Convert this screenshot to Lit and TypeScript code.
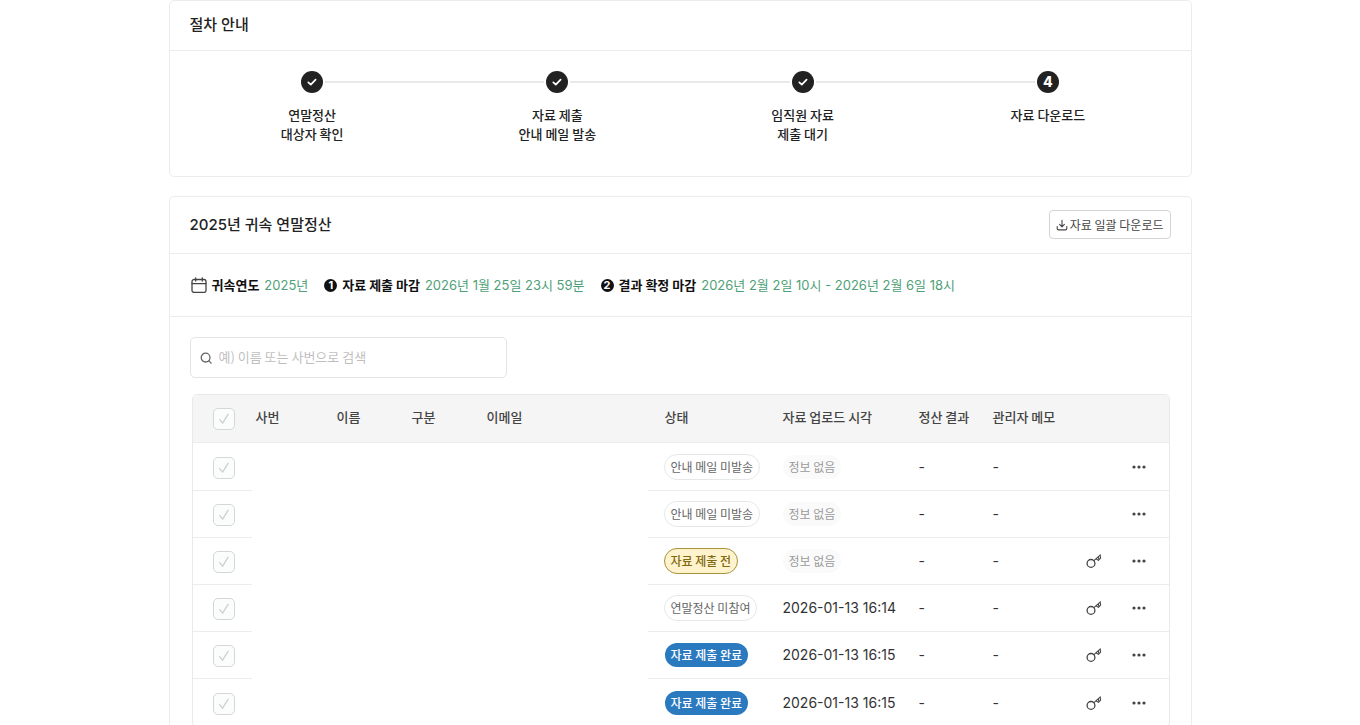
import { LitElement, html, css, svg, nothing } from "lit";
import { customElement } from "lit/decorators.js";

interface Row {
  status: string;
  tone: "plain" | "warn" | "done";
  time?: string;
  key?: boolean;
}

const ROWS: Row[] = [
  { status: "안내 메일 미발송", tone: "plain" },
  { status: "안내 메일 미발송", tone: "plain" },
  { status: "자료 제출 전", tone: "warn", key: true },
  { status: "연말정산 미참여", tone: "plain", time: "2026-01-13 16:14", key: true },
  { status: "자료 제출 완료", tone: "done", time: "2026-01-13 16:15", key: true },
  { status: "자료 제출 완료", tone: "done", time: "2026-01-13 16:15", key: true },
];

const STEPS: { lines: string[]; done: boolean }[] = [
  { lines: ["연말정산", "대상자 확인"], done: true },
  { lines: ["자료 제출", "안내 메일 발송"], done: true },
  { lines: ["임직원 자료", "제출 대기"], done: true },
  { lines: ["자료 다운로드"], done: false },
];

const icon = (size: number, body: unknown) => html`<svg
  class="icon" width=${size} height=${size} viewBox="0 0 ${size} ${size}"
  fill="none" stroke="currentColor" stroke-linecap="round" stroke-linejoin="round"
  aria-hidden="true">${body}</svg>`;

const stepCheck = icon(22, svg`<path d="M7.3 11.3 9.8 13.7 14.6 8.6" stroke-width="1.7"/>`);
const calendar = icon(16, svg`<rect x="1" y="2.5" width="14" height="12.9" rx="2" stroke-width="1.3"/><path d="M1 6.6H15M4.7 .8V4M11.3 .8V4" stroke-width="1.3"/>`);
const download = icon(12, svg`<path d="M6 1.2V7.6M3.6 5.4 6 7.8 8.4 5.4M1.2 7.6V9.6Q1.2 10.9 2.5 10.9H9.5Q10.8 10.9 10.8 9.6V7.6" stroke-width="1.1"/>`);
const search = icon(12, svg`<circle cx="5.6" cy="5.6" r="4.4" stroke-width="1.3"/><path d="M8.9 8.9 11.1 11.1" stroke-width="1.3"/>`);
const keyIcon = icon(16, svg`<circle cx="5" cy="10.4" r="3.9" stroke-width="1.3"/><path d="M7.9 7.6 14.4 1.8M10 5.7 12.4 7.4 14.6 5.2 14.2 2.2M12.2 3.9 13 6.6" stroke-width="1.1"/>`);
const dots = html`<svg class="icon" width="16" height="16" viewBox="0 0 16 16" fill="currentColor" aria-hidden="true">
  <circle cx="3" cy="8" r="1.6"/><circle cx="8" cy="8" r="1.6"/><circle cx="13" cy="8" r="1.6"/></svg>`;

@customElement("app-root")
export class AppRoot extends LitElement {
  static styles = css`
    :host {
      display: block;
      background: #fff;
      color: #222;
      font: 400 13px/20px Inter, "Noto Sans CJK KR", sans-serif;
    }
    * { box-sizing: border-box; }
    h2, p, ol { margin: 0; padding: 0; }
    .page {
      max-width: 1023px;
      margin: 0 auto;
      display: flex;
      flex-direction: column;
      gap: 19px;
    }
    .card { border: 1px solid #ececec; border-radius: 5px; }
    .open { border-bottom: 0; border-radius: 5px 5px 0 0; }
    .head {
      display: flex;
      align-items: center;
      justify-content: space-between;
      padding: 13px 20px 15px;
      border-bottom: 1px solid #ececec;
    }
    h2 { font-size: 15px; line-height: 21px; font-weight: 500; }
    .icon { display: block; flex: none; }

    .steps {
      list-style: none;
      display: grid;
      grid-template-columns: repeat(4, 1fr);
      padding: 20px 20px 33px;
    }
    .step { text-align: center; }
    .track {
      display: grid;
      grid-template-columns: 1fr 22px 1fr;
      column-gap: 2px;
      align-items: center;
      margin-bottom: 12px;
    }
    .rail { height: 2px; background: #e9e9e9; }
    .step:first-child .rail:first-child,
    .step:last-child .rail:last-child { background: none; }
    .dot {
      display: grid;
      place-items: center;
      height: 22px;
      border-radius: 50%;
      background: #222;
      color: #fff;
      font-size: 14px;
      font-weight: 800;
      line-height: 22px;
    }
    .label {
      font-family: "Noto Sans CJK KR", sans-serif;
      font-weight: 500;
      line-height: 19px;
    }
    .label span { display: block; }

    .head.tall { padding-bottom: 14px; }
    button { font: inherit; color: inherit; background: none; border: 0; padding: 0; cursor: pointer; }
    .download {
      display: flex;
      align-items: center;
      gap: 2px;
      height: 29px;
      padding: 0 6px;
      border: 1px solid #d4d4d4;
      border-radius: 4px;
      color: #444;
      font: 400 12px/18px "Noto Sans CJK KR", sans-serif;
    }

    .meta {
      display: flex;
      flex-wrap: wrap;
      gap: 4px 16px;
      padding: 21px 21px;
      border-bottom: 1px solid #ececec;
    }
    .item { display: flex; align-items: center; gap: 5px; color: #111; }
    .item strong { font-weight: 700; font-family: "Noto Sans CJK KR", sans-serif; }
    .item .icon { color: #444; }
    .value { color: #4f9f78; }
    .num {
      width: 13px;
      height: 13px;
      border-radius: 50%;
      background: #111;
      color: #fff;
      font-size: 11px;
      line-height: 13px;
      font-weight: 700;
      text-align: center;
    }

    .body { padding: 20px 20px 0; }
    .search {
      display: flex;
      align-items: center;
      gap: 7px;
      width: 317px;
      max-width: 100%;
      height: 41px;
      padding: 0 9px;
      border: 1px solid #e2e4e5;
      border-radius: 5px;
      color: #666;
    }
    .search input {
      flex: 1;
      min-width: 0;
      border: 0;
      outline: 0;
      padding: 0 0 2px;
      background: none;
      font: 400 13px/20px "Noto Sans CJK KR", sans-serif;
      color: #222;
    }
    .search input::placeholder { color: #bfbfbf; opacity: 1; }

    .frame {
      margin: 16px 1px 0 2px;
      border: 1px solid #e9e9e9;
      border-radius: 5px;
      overflow: hidden;
    }
    table { width: 100%; table-layout: fixed; border-collapse: separate; border-spacing: 0; }
    th, td { height: 47px; padding: 0 0 0 17px; text-align: left; border-bottom: 1px solid #ececec; }
    th {
      height: 48px;
      background: #f5f5f5;
      color: #444;
      font-family: "Noto Sans CJK KR", sans-serif;
      font-weight: 500;
      padding-bottom: 3px;
    }
    td { color: #333; font-size: 14px; }
    tbody tr:first-child td { height: 48px; }
    tbody tr:last-child td { border-bottom: 0; }
    th.person, td.person { padding-left: 4px; }
    td.person { border-bottom-color: transparent; }
    .c-check { width: 59px; }
    .c-id { width: 81px; }
    .c-name, .c-kind { width: 75px; }
    .c-status { width: 118px; }
    .c-time { width: 136px; }
    .c-result { width: 74px; }
    .c-memo { width: 103px; }
    .c-key { width: 30px; }
    .c-more { width: 60px; }
    th.tick { padding: 0 0 0 20px; }
    td.tick { padding: 2px 0 0 20px; }
    .box { display: grid; width: 22px; height: 22px; }
    .box input, .box .icon { grid-area: 1 / 1; margin: 0; }
    .box input {
      appearance: none;
      width: 22px;
      height: 22px;
      border: 1px solid #d4d7d8;
      border-radius: 5px;
      background: #fbfdfd;
    }
    .box .icon { color: #cdd0d1; pointer-events: none; z-index: 1; }

    .pill, .none {
      display: inline-block;
      vertical-align: middle;
      font: 400 12px/18px "Noto Sans CJK KR", sans-serif;
      border-radius: 13px;
      white-space: nowrap;
    }
    td.status { padding-left: 16px; }
    .pill { padding: 3px 6px; border: 1px solid #e6e8e8; color: #666; }
    .pill.warn { background: #fff3cd; border-color: #a8923a; color: #7f6a10; font-weight: 500; }
    .pill.done { background: #2b7abf; background-clip: padding-box; border-color: transparent; color: #fff; font-weight: 500; }
    .none { padding: 3px 6px; background: #fafafa; color: #9a9a9a; }
    td.act { padding-left: 0; }
    .act button { display: grid; place-items: center; width: 100%; height: 24px; color: #444; }
  `;

  private tick(label: string) {
    return html`<label class="box"><input type="checkbox" disabled aria-label=${label} />${icon(
      22,
      svg`<path d="M6.6 11.6 9.6 15.2 15.2 6.2" stroke-width="1.3"/>`,
    )}</label>`;
  }

  private step(s: { lines: string[]; done: boolean }, i: number) {
    return html`<li class="step">
      <div class="track">
        <span class="rail"></span>
        <span class="dot">${s.done ? stepCheck : i + 1}</span>
        <span class="rail"></span>
      </div>
      <p class="label">${s.lines.map((l) => html`<span>${l}</span>`)}</p>
    </li>`;
  }

  private row(r: Row, i: number) {
    return html`<tr>
      <td class="tick">${this.tick(`${i + 1}행 선택`)}</td>
      <td class="person"></td>
      <td class="person"></td>
      <td class="person"></td>
      <td class="person"></td>
      <td class="status"><span class="pill ${r.tone}">${r.status}</span></td>
      <td>${r.time ?? html`<span class="none">정보 없음</span>`}</td>
      <td>-</td>
      <td>-</td>
      <td class="act">${r.key ? html`<button type="button" aria-label="비밀번호">${keyIcon}</button>` : nothing}</td>
      <td class="act"><button type="button" aria-label="더보기">${dots}</button></td>
    </tr>`;
  }

  render() {
    return html`<main class="page">
      <section class="card">
        <header class="head"><h2>절차 안내</h2></header>
        <ol class="steps">${STEPS.map((s, i) => this.step(s, i))}</ol>
      </section>
      <section class="card open">
        <header class="head tall">
          <h2>2025년 귀속 연말정산</h2>
          <button class="download" type="button">${download}자료 일괄 다운로드</button>
        </header>
        <div class="meta">
          <span class="item">${calendar}<strong>귀속연도</strong><span class="value">2025년</span></span>
          <span class="item"><span class="num">1</span><strong>자료 제출 마감</strong><span class="value">2026년 1월 25일 23시 59분</span></span>
          <span class="item"><span class="num">2</span><strong>결과 확정 마감</strong><span class="value">2026년 2월 2일 10시 - 2026년 2월 6일 18시</span></span>
        </div>
        <div class="body">
          <label class="search">${search}<input type="text" aria-label="검색" placeholder="예) 이름 또는 사번으로 검색" /></label>
          <div class="frame">
            <table>
              <colgroup>
                <col class="c-check" /><col class="c-id" /><col class="c-name" /><col class="c-kind" /><col />
                <col class="c-status" /><col class="c-time" /><col class="c-result" /><col class="c-memo" />
                <col class="c-key" /><col class="c-more" />
              </colgroup>
              <thead>
                <tr>
                  <th class="tick">${this.tick("전체 선택")}</th>
                  <th class="person">사번</th>
                  <th class="person">이름</th>
                  <th class="person">구분</th>
                  <th class="person">이메일</th>
                  <th>상태</th>
                  <th>자료 업로드 시각</th>
                  <th>정산 결과</th>
                  <th>관리자 메모</th>
                  <th></th>
                  <th></th>
                </tr>
              </thead>
              <tbody>${ROWS.map((r, i) => this.row(r, i))}</tbody>
            </table>
          </div>
        </div>
      </section>
    </main>`;
  }
}
